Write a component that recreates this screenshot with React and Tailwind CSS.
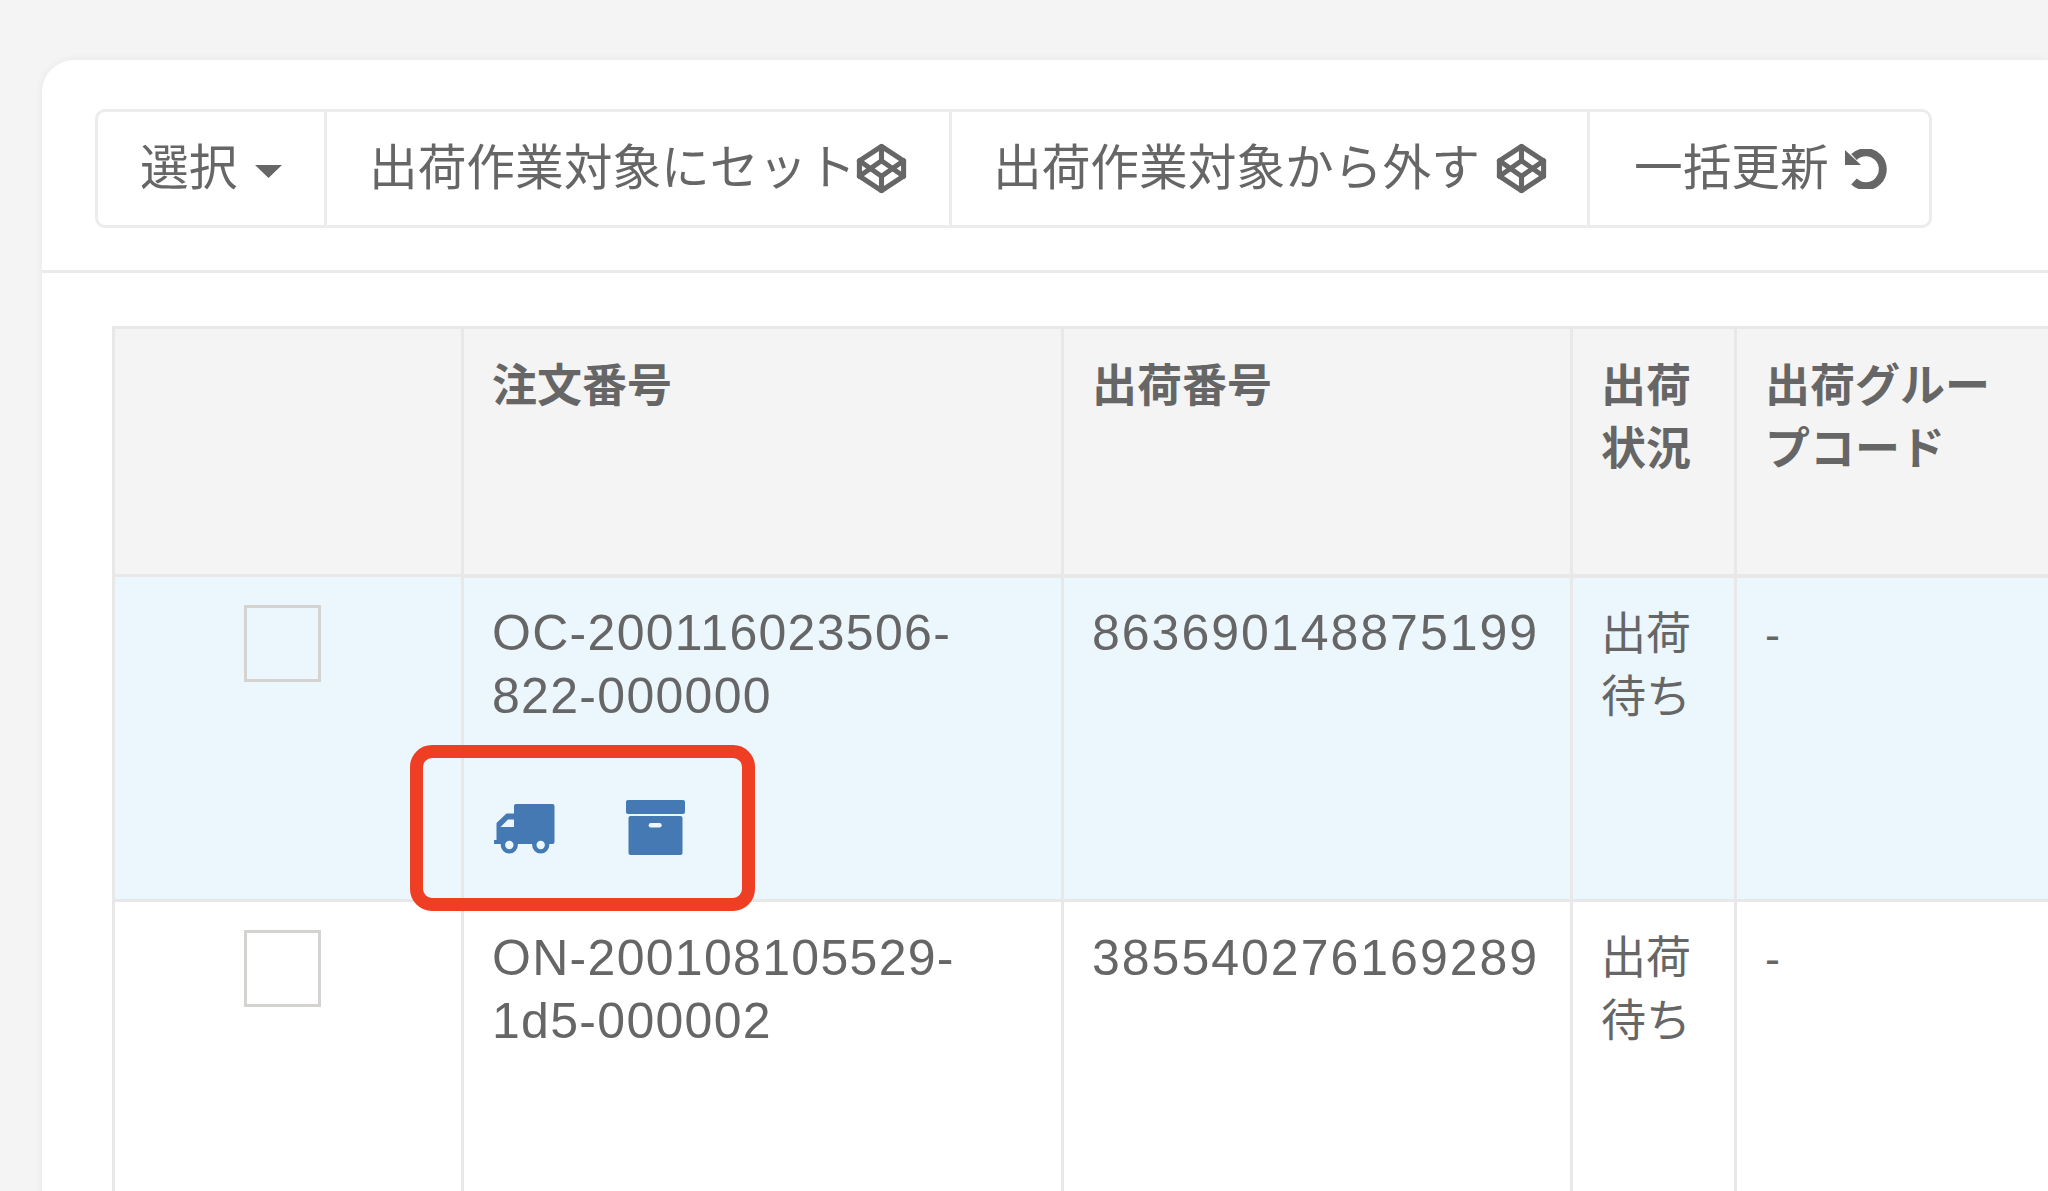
import { Codepen } from "lucide-react";

const rows = [
  { id: "OC-200116023506-822-000000", ship: "863690148875199", active: true },
  { id: "ON-200108105529-1d5-000002", ship: "385540276169289", active: false },
];

const TruckIcon = () => (
  <svg width="61" height="51" viewBox="0 0 61 51" className="block">
    <rect x="20" y="0" width="40.5" height="40" rx="2" fill="#4479b3" />
    <path d="M22 9.5H12.5L2.5 19V36H1a2 2 0 0 0 0 4h21z" fill="#4479b3" />
    <path d="M6.5 23l7.5-7.5h6V23z" fill="#ebf6fd" />
    <circle cx="15.3" cy="41" r="8.6" fill="#4479b3" />
    <circle cx="46.7" cy="41" r="8.6" fill="#4479b3" />
    <circle cx="15.3" cy="41" r="4.2" fill="#ebf6fd" />
    <circle cx="46.7" cy="41" r="4.2" fill="#ebf6fd" />
  </svg>
);

const ArchiveIcon = () => (
  <svg width="59" height="55" viewBox="0 0 59 55" className="block">
    <rect x="0" y="0" width="59" height="14" rx="2" fill="#4479b3" />
    <rect x="2.5" y="16" width="54" height="39" rx="2" fill="#4479b3" />
    <rect x="22.7" y="23" width="13" height="4.4" rx="2.2" fill="#ebf6fd" />
  </svg>
);

const UndoIcon = () => (
  <svg width="42" height="40" viewBox="0 0 42 40" className="block ml-[16px]">
    <path d="M9 32.5A17 17 0 1 0 9 8" fill="none" stroke="#666" strokeWidth="8" />
    <path d="M0 1V16H16z" fill="#666" />
  </svg>
);

const ToolButton = ({ className, children }) => (
  <div className={`flex items-center h-full whitespace-nowrap ${className}`}>{children}</div>
);

const Checkbox = () => (
  <div className="ml-[129px] w-[77px] h-[77px] border-[3px] border-[#d5d3cf]" />
);

const App = () => {
  return (
    <div className="h-[1191px] overflow-hidden bg-[#f4f4f4] pt-[60px] pl-[42px] text-[#666] font-['Liberation_Sans','Noto_Sans_CJK_JP',sans-serif]">
      <div className="min-h-[1131px] bg-white rounded-tl-[32px] shadow-[0_0_8px_rgba(0,0,0,0.06)]">
        {/* Toolbar */}
        <div className="pt-[49px] pl-[53px] pb-[42px] border-b-[3px] border-[#e9eaec]">
          <div className="flex w-[1837px] h-[119px] text-[48.7px] border-[3px] border-[#ebecee] rounded-[10px]">
            <ToolButton className="w-[229px] pl-[42px] border-r-[3px] border-[#ebecee]">
              選択
              <svg width="27" height="13" viewBox="0 0 27 13" className="ml-[18px] mt-[6px]">
                <path d="M0 0H27L13.5 13z" fill="#666" />
              </svg>
            </ToolButton>
            <ToolButton className="w-[625px] pl-[42px] border-r-[3px] border-[#ebecee]">
              出荷作業対象にセット
              <Codepen size={53} strokeWidth={2.3} className="-ml-[1px]" />
            </ToolButton>
            <ToolButton className="w-[638px] pl-[41px] border-r-[3px] border-[#ebecee]">
              出荷作業対象から外す
              <Codepen size={53} strokeWidth={2.3} className="ml-[15px]" />
            </ToolButton>
            <ToolButton className="flex-1 pl-[44px]">
              一括更新
              <UndoIcon />
            </ToolButton>
          </div>
        </div>

        {/* Orders table */}
        <div className="pt-[53px] pl-[70px]">
          <table className="table-fixed border-collapse w-[1982px] text-[45px] leading-[63px]">
            <colgroup>
              <col className="w-[349px]" />
              <col className="w-[600px]" />
              <col className="w-[509px]" />
              <col className="w-[164px]" />
              <col className="w-[360px]" />
            </colgroup>
            <thead>
              <tr className="h-[248px] bg-[#f4f4f4] align-top font-bold text-left">
                <th className="border-[3px] border-[#e8e8e8]" />
                <th className="border-[3px] border-[#e8e8e8] border-b-4 pt-[26px] pl-[28px]">注文番号</th>
                <th className="border-[3px] border-[#e8e8e8] border-b-4 pt-[26px] pl-[28px]">出荷番号</th>
                <th className="border-[3px] border-[#e8e8e8] border-b-4 pt-[26px] pl-[28px]">出荷状況</th>
                <th className="border-[3px] border-[#e8e8e8] border-b-4 pt-[26px] pl-[28px] pr-[76px]">出荷グループコード</th>
              </tr>
            </thead>
            <tbody>
              {rows.map((row) => (
                <tr key={row.id} className={`align-top ${row.active ? "h-[325px] bg-[#ebf6fd]" : "h-[400px] bg-white"}`}>
                  <td className="border-[3px] border-[#e8e8e8] pt-[28px]">
                    <Checkbox />
                  </td>
                  <td className={`border-[3px] border-[#e8e8e8] pl-[28px] pr-[30px] text-[50px] tracking-[1.3px] ${row.active ? "pt-[24px]" : "pt-[25px]"}`}>
                    {row.id}
                    {row.active && (
                      <div className="relative flex items-end gap-[71px] mt-[72px] ml-[2px] w-[191px] tracking-normal">
                        <TruckIcon />
                        <ArchiveIcon />
                        <div className="absolute -left-[84px] -top-[55px] w-[345px] h-[166px] border-[13px] border-[#ee3f24] rounded-[22px]" />
                      </div>
                    )}
                  </td>
                  <td className={`border-[3px] border-[#e8e8e8] pl-[28px] text-[50px] tracking-[2px] ${row.active ? "pt-[24px]" : "pt-[25px]"}`}>{row.ship}</td>
                  <td className="border-[3px] border-[#e8e8e8] pt-[25px] pl-[28px]">出荷待ち</td>
                  <td className="border-[3px] border-[#e8e8e8] pt-[25px] pl-[28px]">-</td>
                </tr>
              ))}
            </tbody>
          </table>
        </div>
      </div>
    </div>
  );
};

export default App;
